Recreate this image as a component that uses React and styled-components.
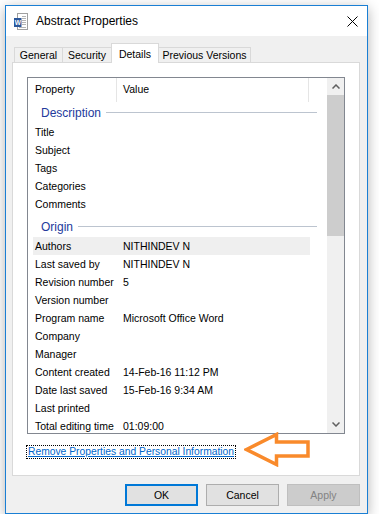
import React from 'react';
import styled, { createGlobalStyle } from 'styled-components';

const GlobalStyle = createGlobalStyle`
  html, body {
    margin: 0;
    padding: 0;
    background: #fff;
  }
  body {
    font-family: "Liberation Sans", Arial, sans-serif;
    font-size: 10.5px;
    color: #000;
  }
  * { box-sizing: border-box; }
`;

const Window = styled.div`
  margin: 5px 0 0 5px;
  width: 363px;
  border: 1px solid #1a7fd4;
  background: #f0f0f0;
  box-shadow: 0 3px 12px rgba(0, 0, 0, 0.3);
  display: flex;
  flex-direction: column;
`;

const TitleBar = styled.div`
  height: 30px;
  background: #fff;
  display: flex;
  align-items: center;
  padding: 0 9px 0 8px;
`;

const Title = styled.div`
  flex: 1;
  margin-left: 8px;
  font-size: 12px;
`;

const Body = styled.div`
  padding: 7px 7px 7px 6px;
  display: flex;
  flex-direction: column;
`;

const Tabs = styled.div`
  display: flex;
  align-items: flex-start;
  height: 19px;
  padding-left: 2px;
  position: relative;
  z-index: 1;
`;

const Tab = styled.div`
  width: ${p => p.w}px;
  height: ${p => (p.active ? 20 : 15)}px;
  margin-top: ${p => (p.active ? 0 : 4)}px;
  margin-left: ${p => (p.first ? 0 : -1)}px;
  border: 1px solid #d9d9d9;
  border-bottom: none;
  background: ${p => (p.active ? '#fff' : '#f0f0f0')};
  display: flex;
  align-items: center;
  justify-content: center;
  position: relative;
  z-index: ${p => (p.active ? 2 : 1)};
`;

const Panel = styled.div`
  height: 414px;
  border: 1px solid #d9d9d9;
  background: #fff;
  padding: 14px 14px 0;
  position: relative;
`;

const ListBox = styled.div`
  height: 357px;
  border: 1px solid #828790;
  display: flex;
`;

const ListContent = styled.div`
  flex: 1;
  overflow: hidden;
`;

const HeaderRow = styled.div`
  display: flex;
  height: 24px;
`;

const HeaderCell = styled.div`
  width: ${p => p.w}px;
  padding-left: ${p => p.pad}px;
  border-right: 1px solid #e5e5e5;
  display: flex;
  align-items: center;
  padding-bottom: 2px;
`;

const Group = styled.div`
  display: flex;
  align-items: center;
  height: 21px;
  margin: ${p => p.gap || 0}px 0 0 5px;
  width: 284px;
  padding-left: 8px;
  font-size: 12px;
  color: #233a9c;

  &::after {
    content: '';
    flex: 1;
    height: 1px;
    margin-left: 5px;
    background: #bcc4cf;
  }
`;

const Row = styled.div`
  display: flex;
  align-items: center;
  height: 18px;
  margin-left: 5px;
  width: 277px;
  background: ${p => (p.hot ? '#efefef' : 'transparent')};
`;

const Label = styled.div`
  width: 90px;
  padding-left: 2px;
  white-space: nowrap;
`;

const Value = styled.div`
  flex: 1;
  white-space: nowrap;
`;

const ScrollBar = styled.div`
  width: 17px;
  background: #f0f0f0;
  display: flex;
  flex-direction: column;
`;

const ScrollButton = styled.div`
  height: 17px;
  display: flex;
  align-items: center;
  justify-content: center;
`;

const Thumb = styled.div`
  height: 141px;
  background: #cdcdcd;
`;

const Track = styled.div`
  flex: 1;
`;

const LinkRow = styled.div`
  margin-top: 11px;
`;

const Link = styled.a`
  display: inline-block;
  font-size: 10.3px;
  line-height: 12px;
  padding: 0 1px;
  outline: 1px dotted #000;
  color: #0066cc;
  text-decoration: underline;
  cursor: pointer;
`;

const Arrow = styled.svg`
  position: absolute;
  left: 231px;
  top: 369px;
`;

const Buttons = styled.div`
  display: flex;
  justify-content: flex-end;
  gap: 8px;
  margin-top: 8px;
`;

const Button = styled.button`
  width: 73px;
  height: 22px;
  font-family: inherit;
  font-size: 10.5px;
  padding: 0;
  background: ${p => (p.disabled ? '#cccccc' : '#e1e1e1')};
  color: ${p => (p.disabled ? '#838383' : '#000')};
  border: ${p => (p.primary ? '2px solid #0078d7' : p.disabled ? '1px solid #bfbfbf' : '1px solid #adadad')};
`;

const WordIcon = () => (
  <svg width="14" height="17" viewBox="0 0 14 17">
    <rect x="3.5" y="0.5" width="10" height="16" fill="#fff" stroke="#a0a0a0" />
    <g stroke="#b4b4b4" strokeWidth="1">
      <line x1="8" y1="3.5" x2="12" y2="3.5" />
      <line x1="8" y1="5.5" x2="12" y2="5.5" />
      <line x1="8" y1="7.5" x2="12" y2="7.5" />
      <line x1="8" y1="9.5" x2="12" y2="9.5" />
      <line x1="8" y1="11.5" x2="12" y2="11.5" />
      <line x1="5" y1="14.5" x2="12" y2="14.5" />
    </g>
    <rect x="0" y="5" width="7.5" height="9" fill="#2b579a" />
    <text x="3.75" y="12" fontSize="6.5" fontWeight="bold" fill="#fff" textAnchor="middle" fontFamily="Liberation Sans, sans-serif">W</text>
  </svg>
);

const CloseIcon = () => (
  <svg width="11" height="11" viewBox="0 0 11 11">
    <path d="M0.5 0.5 L10.5 10.5 M10.5 0.5 L0.5 10.5" stroke="#000" strokeWidth="1" />
  </svg>
);

const Chevron = ({ down }) => (
  <svg width="8" height="5" viewBox="0 0 8 5">
    <path d={down ? 'M0.5 0.5 L4 4 L7.5 0.5' : 'M0.5 4.5 L4 1 L7.5 4.5'} fill="none" stroke="#606060" strokeWidth="1.5" />
  </svg>
);

const description = ['Title', 'Subject', 'Tags', 'Categories', 'Comments'];

const origin = [
  ['Authors', 'NITHINDEV N', true],
  ['Last saved by', 'NITHINDEV N'],
  ['Revision number', '5'],
  ['Version number', ''],
  ['Program name', 'Microsoft Office Word'],
  ['Company', ''],
  ['Manager', ''],
  ['Content created', '14-Feb-16 11:12 PM'],
  ['Date last saved', '15-Feb-16 9:34 AM'],
  ['Last printed', ''],
  ['Total editing time', '01:09:00'],
];

export default function App() {
  return (
    <>
      <GlobalStyle />
      <Window>
        <TitleBar>
          <WordIcon />
          <Title>Abstract Properties</Title>
          <CloseIcon />
        </TitleBar>
        <Body>
          <Tabs>
            <Tab w={49} first>General</Tab>
            <Tab w={50}>Security</Tab>
            <Tab w={48} active>Details</Tab>
            <Tab w={93}>Previous Versions</Tab>
          </Tabs>
          <Panel>
            <ListBox>
              <ListContent>
                <HeaderRow>
                  <HeaderCell w={89} pad={7}>Property</HeaderCell>
                  <HeaderCell w={192} pad={6}>Value</HeaderCell>
                </HeaderRow>
                <Group>Description</Group>
                {description.map(name => (
                  <Row key={name}>
                    <Label>{name}</Label>
                    <Value />
                  </Row>
                ))}
                <Group gap={3}>Origin</Group>
                {origin.map(([name, value, hot]) => (
                  <Row key={name} hot={hot}>
                    <Label>{name}</Label>
                    <Value>{value}</Value>
                  </Row>
                ))}
              </ListContent>
              <ScrollBar>
                <ScrollButton><Chevron /></ScrollButton>
                <Thumb />
                <Track />
                <ScrollButton><Chevron down /></ScrollButton>
              </ScrollBar>
            </ListBox>
            <LinkRow>
              <Link>Remove Properties and Personal Information</Link>
            </LinkRow>
            <Arrow width="66" height="35" viewBox="0 0 66 35">
              <path
                d="M2.5 17.5 L32.5 2.5 L32.5 10 L64 10 L64 24 L32.5 24 L32.5 32.5 Z"
                fill="none"
                stroke="#f98a2b"
                strokeWidth="3.5"
                strokeLinejoin="miter"
              />
            </Arrow>
          </Panel>
          <Buttons>
            <Button primary>OK</Button>
            <Button>Cancel</Button>
            <Button disabled>Apply</Button>
          </Buttons>
        </Body>
      </Window>
    </>
  );
}
